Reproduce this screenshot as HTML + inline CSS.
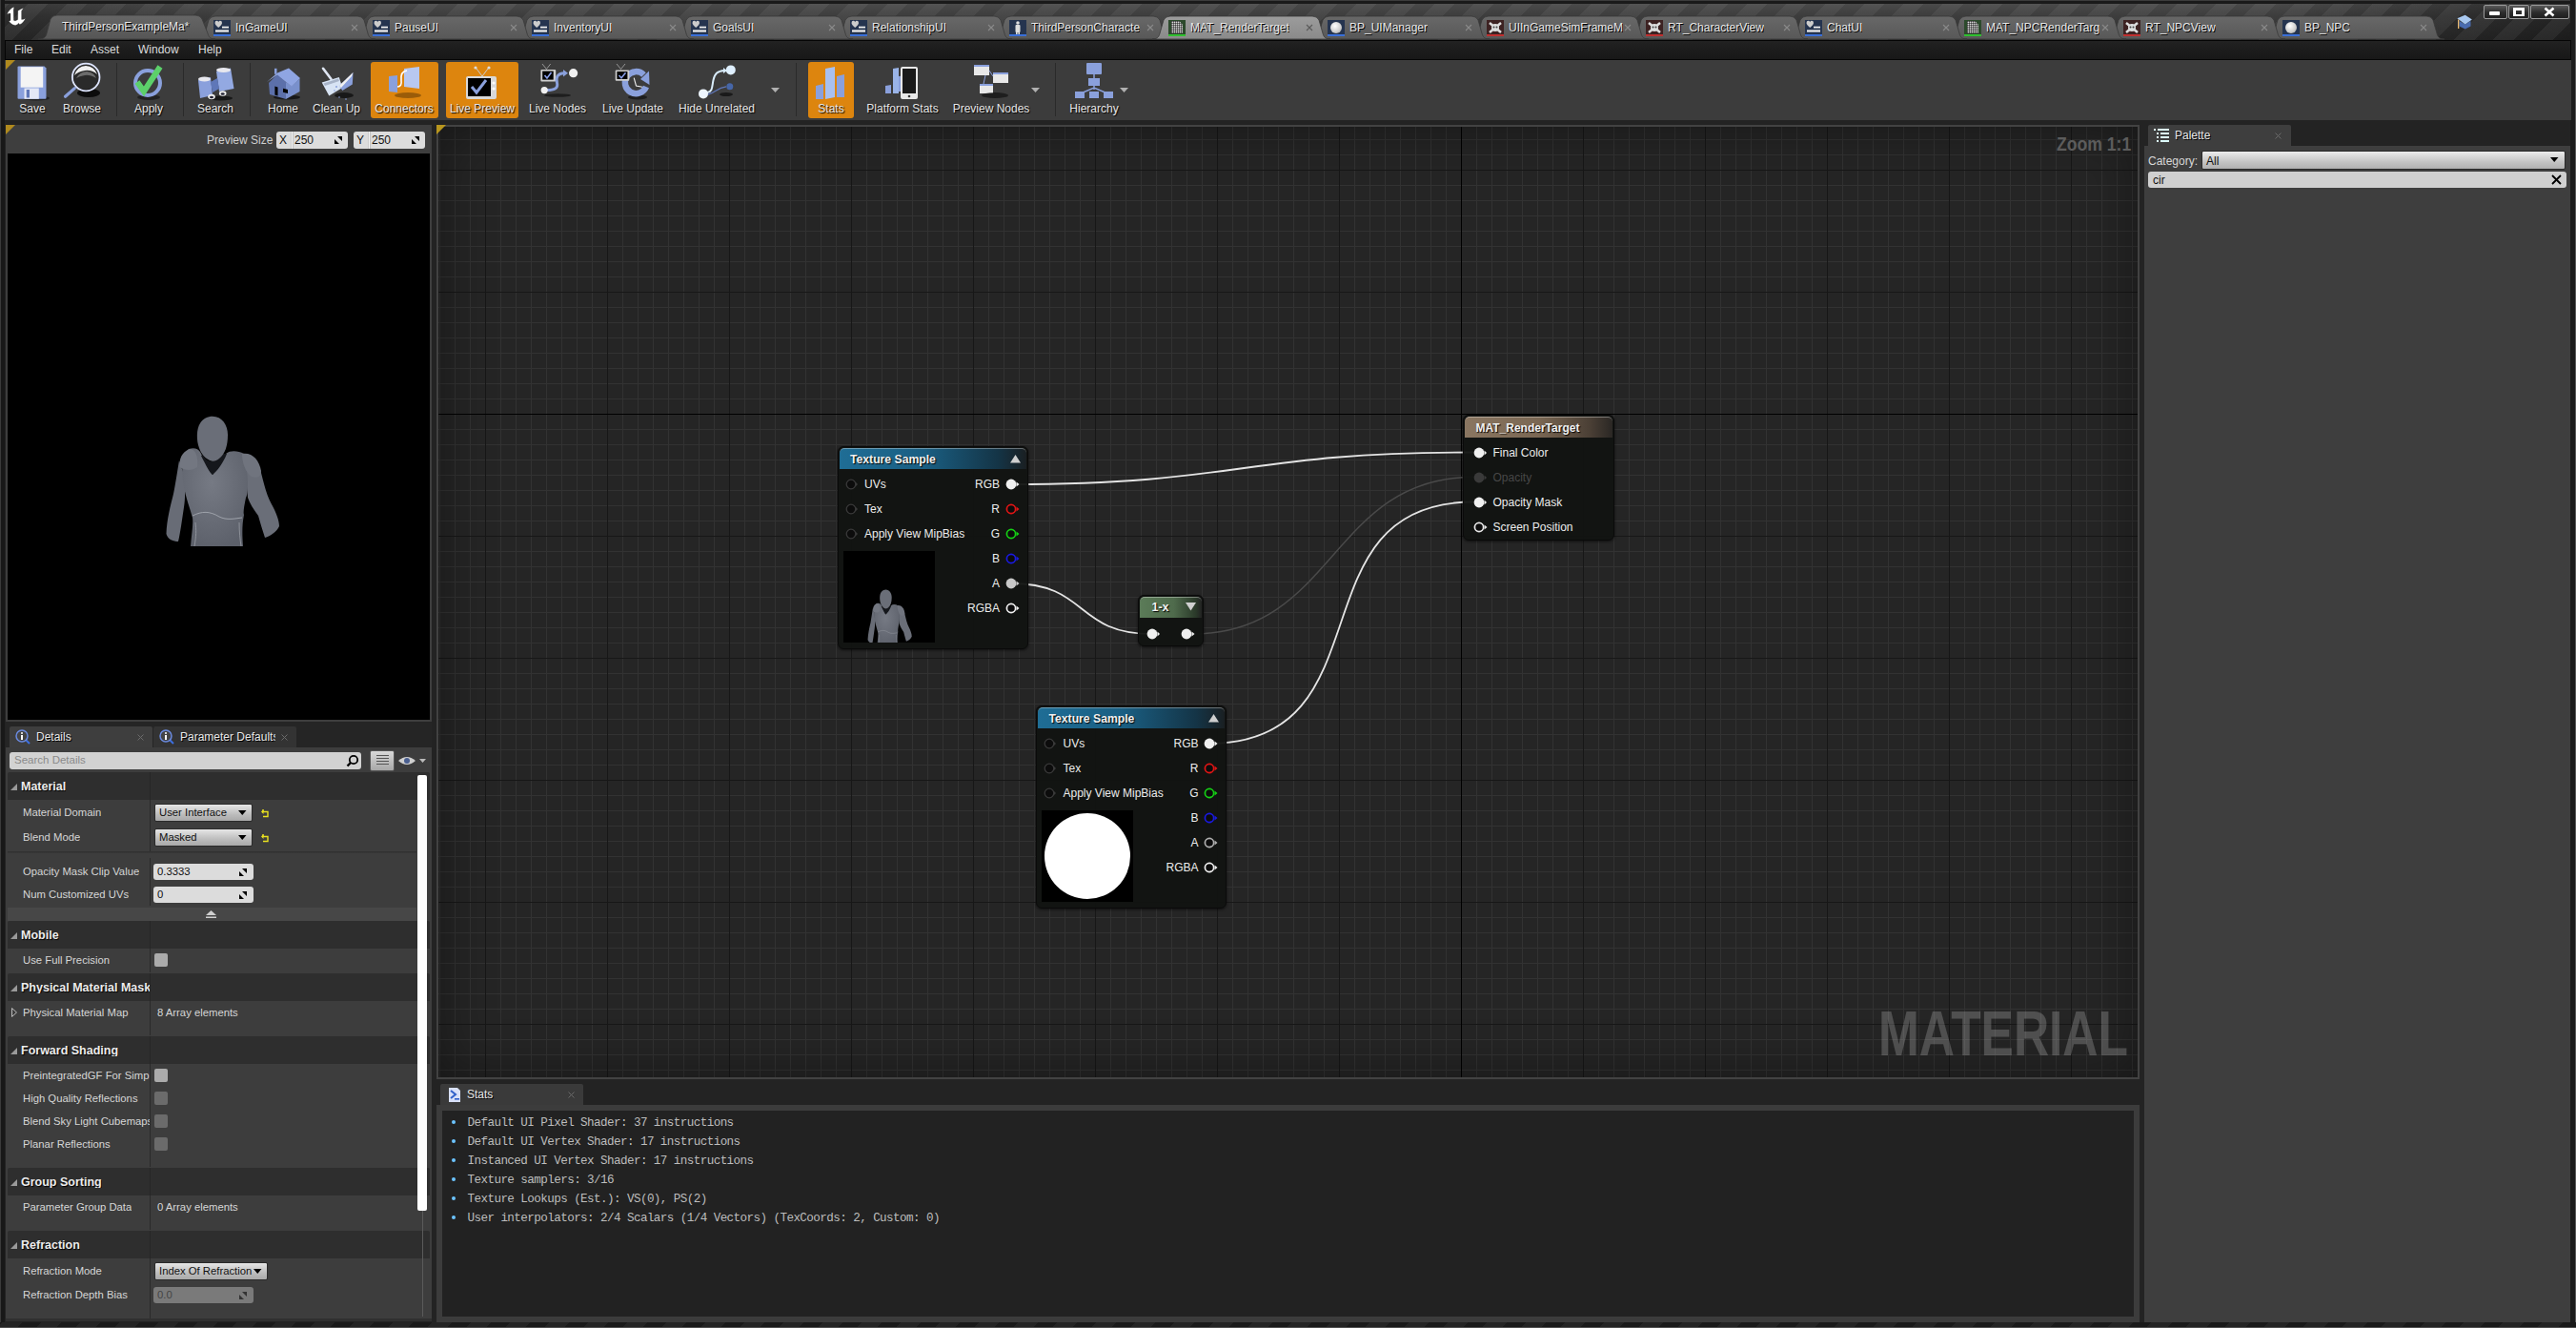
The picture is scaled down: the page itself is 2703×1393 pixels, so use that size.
<!DOCTYPE html>
<html><head><meta charset="utf-8">
<style>
*{box-sizing:border-box;margin:0;padding:0}
html,body{width:2703px;height:1393px;overflow:hidden;background:#232323;font-family:"Liberation Sans",sans-serif;color:#d0d0d0}
.a{position:absolute}
.t{position:absolute;white-space:nowrap;line-height:1}
svg{position:absolute;overflow:visible}
</style></head><body>
<div class="a" style="left:0;top:0;width:2703px;height:42px;background:#1a1a1a"></div>
<div class="a" style="left:5px;top:4px;width:2693px;height:38px;background:linear-gradient(#4a4a4a 0%,#3c3c3c 35%,#2e2e2e 100%)"></div>
<div class="a" style="left:5px;top:4px;width:2693px;height:38px;background:linear-gradient(90deg,rgba(0,0,0,0.25) 0px,rgba(0,0,0,0) 240px,rgba(0,0,0,0) 2380px,rgba(0,0,0,0.4) 2693px)"></div>
<div class="a" style="left:5px;top:4px;width:2693px;height:38px;background:repeating-linear-gradient(-45deg,rgba(255,255,255,0) 0 14px,rgba(255,255,255,0.055) 14px 29px)"></div>
<div class="a" style="left:0;top:0;width:2703px;height:1px;background:#3c3c3c"></div>
<svg style="left:4px;top:4px" width="28" height="28" viewBox="0 0 28 28">
<path d="M3.2 11 C5 7 8 4 10.8 3.2 L10.2 6.5 L10.4 17.2 Q11.5 18.2 13 17.5 L14.7 16.6 L14.8 7.2 C17 6 19 5 20.8 4.2 L18.6 7.5 L18.6 16.4 Q20.5 16.5 22.8 15.2 C21 19 18.5 21.5 16.2 21.6 L15.6 20.2 C14 22 12.8 22.6 11.8 22.6 C9 22.2 7 20.5 5.3 18.3 L7 17.5 L7 10 Q5 10 3.2 11 Z" fill="#fff" stroke="#000" stroke-width="0.4" stroke-opacity="0.5"/>
</svg><svg style="left:0;top:0" width="1" height="1"><defs><linearGradient id="tgi" x1="0" y1="0" x2="0" y2="1"><stop offset="0" stop-color="#686868"/><stop offset="1" stop-color="#585858"/></linearGradient><linearGradient id="tga" x1="0" y1="0" x2="0" y2="1"><stop offset="0" stop-color="#9c9c9c"/><stop offset="1" stop-color="#8a8a8a"/></linearGradient></defs></svg><svg style="left:0;top:0" width="2703" height="42"><path d="M2378,41 C2383,41 2385,39 2386,35 L2390,21 Q2392,17 2397,17 L2546,17 Q2551,17 2553,21 L2557,35 C2558,39 2560,41 2565,41 Z" fill="url(#tgi)" stroke="#383838" stroke-width="0.8"/></svg><div class="a" style="left:2395px;top:21px;width:18px;height:17px;background:#25344f;border-bottom:2px solid #3a6fd8"></div><div class="a" style="left:2398px;top:23px;width:12px;height:12px;border-radius:50%;background:radial-gradient(circle at 40% 35%,#fff,#ccc 60%,#888)"></div><div class="t" style="left:2418px;top:22.6px;font-size:12px;color:#e8e8e8;text-shadow:1px 1px 0 #000;max-width:120px;overflow:hidden;padding-bottom:3px">BP_NPC</div><svg style="left:2539px;top:25px" width="8" height="8"><path d="M1 1 L7 7 M7 1 L1 7" stroke="#8a8a8a" stroke-width="1.1"/></svg><svg style="left:0;top:0" width="2703" height="42"><path d="M2211,41 C2216,41 2218,39 2219,35 L2223,21 Q2225,17 2230,17 L2379,17 Q2384,17 2386,21 L2390,35 C2391,39 2393,41 2398,41 Z" fill="url(#tgi)" stroke="#383838" stroke-width="0.8"/></svg><div class="a" style="left:2228px;top:21px;width:18px;height:17px;background:#3d2222;border-bottom:2px solid #c03030"></div><svg style="left:2228px;top:21px" width="18" height="17"><path d="M3 3 L15 13 M15 3 L3 13" stroke="#ddd" stroke-width="2.5"/><circle cx="9" cy="8" r="4" fill="#ddd"/><circle cx="7.5" cy="7.5" r="1" fill="#444"/><circle cx="10.5" cy="7.5" r="1" fill="#444"/></svg><div class="t" style="left:2251px;top:22.6px;font-size:12px;color:#e8e8e8;text-shadow:1px 1px 0 #000;max-width:120px;overflow:hidden;padding-bottom:3px">RT_NPCView</div><svg style="left:2372px;top:25px" width="8" height="8"><path d="M1 1 L7 7 M7 1 L1 7" stroke="#8a8a8a" stroke-width="1.1"/></svg><svg style="left:0;top:0" width="2703" height="42"><path d="M2044,41 C2049,41 2051,39 2052,35 L2056,21 Q2058,17 2063,17 L2212,17 Q2217,17 2219,21 L2223,35 C2224,39 2226,41 2231,41 Z" fill="url(#tgi)" stroke="#383838" stroke-width="0.8"/></svg><div class="a" style="left:2061px;top:21px;width:18px;height:17px;background:#2c4a2c;border-bottom:2px solid #30c030"></div><div class="a" style="left:2064px;top:22px;width:12px;height:13px;background:repeating-linear-gradient(90deg,rgba(0,0,0,.45) 0 0.8px,transparent 0.8px 2px),repeating-linear-gradient(rgba(0,0,0,.45) 0 0.8px,transparent 0.8px 2px),#d8d8d8;clip-path:polygon(0 0,70% 0,100% 30%,100% 100%,0 100%)"></div><div class="t" style="left:2084px;top:22.6px;font-size:12px;color:#e8e8e8;text-shadow:1px 1px 0 #000;max-width:120px;overflow:hidden;padding-bottom:3px">MAT_NPCRenderTarg</div><svg style="left:2205px;top:25px" width="8" height="8"><path d="M1 1 L7 7 M7 1 L1 7" stroke="#8a8a8a" stroke-width="1.1"/></svg><svg style="left:0;top:0" width="2703" height="42"><path d="M1877,41 C1882,41 1884,39 1885,35 L1889,21 Q1891,17 1896,17 L2045,17 Q2050,17 2052,21 L2056,35 C2057,39 2059,41 2064,41 Z" fill="url(#tgi)" stroke="#383838" stroke-width="0.8"/></svg><div class="a" style="left:1894px;top:21px;width:18px;height:17px;background:#25344f;border-bottom:2px solid #3a6fd8"></div><svg style="left:1894px;top:21px" width="18" height="17"><path d="M1.5 3 Q1.5 0.8 3.5 0.8 Q4.8 0.8 5.2 2.2 Q5.6 0.8 7 0.8 Q9 0.8 9 3 Q9 5 5.2 8 Q1.5 5 1.5 3Z" fill="#ccc"/><rect x="9" y="6.7" width="7" height="1.8" fill="#eee"/><rect x="2" y="10.4" width="14" height="2.2" fill="#eee"/></svg><div class="t" style="left:1917px;top:22.6px;font-size:12px;color:#e8e8e8;text-shadow:1px 1px 0 #000;max-width:120px;overflow:hidden;padding-bottom:3px">ChatUI</div><svg style="left:2038px;top:25px" width="8" height="8"><path d="M1 1 L7 7 M7 1 L1 7" stroke="#8a8a8a" stroke-width="1.1"/></svg><svg style="left:0;top:0" width="2703" height="42"><path d="M1710,41 C1715,41 1717,39 1718,35 L1722,21 Q1724,17 1729,17 L1878,17 Q1883,17 1885,21 L1889,35 C1890,39 1892,41 1897,41 Z" fill="url(#tgi)" stroke="#383838" stroke-width="0.8"/></svg><div class="a" style="left:1727px;top:21px;width:18px;height:17px;background:#3d2222;border-bottom:2px solid #c03030"></div><svg style="left:1727px;top:21px" width="18" height="17"><path d="M3 3 L15 13 M15 3 L3 13" stroke="#ddd" stroke-width="2.5"/><circle cx="9" cy="8" r="4" fill="#ddd"/><circle cx="7.5" cy="7.5" r="1" fill="#444"/><circle cx="10.5" cy="7.5" r="1" fill="#444"/></svg><div class="t" style="left:1750px;top:22.6px;font-size:12px;color:#e8e8e8;text-shadow:1px 1px 0 #000;max-width:120px;overflow:hidden;padding-bottom:3px">RT_CharacterView</div><svg style="left:1871px;top:25px" width="8" height="8"><path d="M1 1 L7 7 M7 1 L1 7" stroke="#8a8a8a" stroke-width="1.1"/></svg><svg style="left:0;top:0" width="2703" height="42"><path d="M1543,41 C1548,41 1550,39 1551,35 L1555,21 Q1557,17 1562,17 L1711,17 Q1716,17 1718,21 L1722,35 C1723,39 1725,41 1730,41 Z" fill="url(#tgi)" stroke="#383838" stroke-width="0.8"/></svg><div class="a" style="left:1560px;top:21px;width:18px;height:17px;background:#3d2222;border-bottom:2px solid #c03030"></div><svg style="left:1560px;top:21px" width="18" height="17"><path d="M3 3 L15 13 M15 3 L3 13" stroke="#ddd" stroke-width="2.5"/><circle cx="9" cy="8" r="4" fill="#ddd"/><circle cx="7.5" cy="7.5" r="1" fill="#444"/><circle cx="10.5" cy="7.5" r="1" fill="#444"/></svg><div class="t" style="left:1583px;top:22.6px;font-size:12px;color:#e8e8e8;text-shadow:1px 1px 0 #000;max-width:120px;overflow:hidden;padding-bottom:3px">UIInGameSimFrameM</div><svg style="left:1704px;top:25px" width="8" height="8"><path d="M1 1 L7 7 M7 1 L1 7" stroke="#8a8a8a" stroke-width="1.1"/></svg><svg style="left:0;top:0" width="2703" height="42"><path d="M1376,41 C1381,41 1383,39 1384,35 L1388,21 Q1390,17 1395,17 L1544,17 Q1549,17 1551,21 L1555,35 C1556,39 1558,41 1563,41 Z" fill="url(#tgi)" stroke="#383838" stroke-width="0.8"/></svg><div class="a" style="left:1393px;top:21px;width:18px;height:17px;background:#25344f;border-bottom:2px solid #3a6fd8"></div><div class="a" style="left:1396px;top:23px;width:12px;height:12px;border-radius:50%;background:radial-gradient(circle at 40% 35%,#fff,#ccc 60%,#888)"></div><div class="t" style="left:1416px;top:22.6px;font-size:12px;color:#e8e8e8;text-shadow:1px 1px 0 #000;max-width:120px;overflow:hidden;padding-bottom:3px">BP_UIManager</div><svg style="left:1537px;top:25px" width="8" height="8"><path d="M1 1 L7 7 M7 1 L1 7" stroke="#8a8a8a" stroke-width="1.1"/></svg><svg style="left:0;top:0" width="2703" height="42"><path d="M1042,41 C1047,41 1049,39 1050,35 L1054,21 Q1056,17 1061,17 L1210,17 Q1215,17 1217,21 L1221,35 C1222,39 1224,41 1229,41 Z" fill="url(#tgi)" stroke="#383838" stroke-width="0.8"/></svg><div class="a" style="left:1059px;top:21px;width:18px;height:17px;background:#25344f;border-bottom:2px solid #3a6fd8"></div><svg style="left:1059px;top:21px" width="18" height="17"><circle cx="9" cy="3" r="1.8" fill="#ddd"/><rect x="6.5" y="5" width="5" height="8" rx="1" fill="#ddd"/><rect x="7" y="12" width="1.6" height="3" fill="#ddd"/><rect x="9.4" y="12" width="1.6" height="3" fill="#ddd"/></svg><div class="t" style="left:1082px;top:22.6px;font-size:12px;color:#e8e8e8;text-shadow:1px 1px 0 #000;max-width:120px;overflow:hidden;padding-bottom:3px">ThirdPersonCharacte</div><svg style="left:1203px;top:25px" width="8" height="8"><path d="M1 1 L7 7 M7 1 L1 7" stroke="#8a8a8a" stroke-width="1.1"/></svg><svg style="left:0;top:0" width="2703" height="42"><path d="M875,41 C880,41 882,39 883,35 L887,21 Q889,17 894,17 L1043,17 Q1048,17 1050,21 L1054,35 C1055,39 1057,41 1062,41 Z" fill="url(#tgi)" stroke="#383838" stroke-width="0.8"/></svg><div class="a" style="left:892px;top:21px;width:18px;height:17px;background:#25344f;border-bottom:2px solid #3a6fd8"></div><svg style="left:892px;top:21px" width="18" height="17"><path d="M1.5 3 Q1.5 0.8 3.5 0.8 Q4.8 0.8 5.2 2.2 Q5.6 0.8 7 0.8 Q9 0.8 9 3 Q9 5 5.2 8 Q1.5 5 1.5 3Z" fill="#ccc"/><rect x="9" y="6.7" width="7" height="1.8" fill="#eee"/><rect x="2" y="10.4" width="14" height="2.2" fill="#eee"/></svg><div class="t" style="left:915px;top:22.6px;font-size:12px;color:#e8e8e8;text-shadow:1px 1px 0 #000;max-width:120px;overflow:hidden;padding-bottom:3px">RelationshipUI</div><svg style="left:1036px;top:25px" width="8" height="8"><path d="M1 1 L7 7 M7 1 L1 7" stroke="#8a8a8a" stroke-width="1.1"/></svg><svg style="left:0;top:0" width="2703" height="42"><path d="M708,41 C713,41 715,39 716,35 L720,21 Q722,17 727,17 L876,17 Q881,17 883,21 L887,35 C888,39 890,41 895,41 Z" fill="url(#tgi)" stroke="#383838" stroke-width="0.8"/></svg><div class="a" style="left:725px;top:21px;width:18px;height:17px;background:#25344f;border-bottom:2px solid #3a6fd8"></div><svg style="left:725px;top:21px" width="18" height="17"><path d="M1.5 3 Q1.5 0.8 3.5 0.8 Q4.8 0.8 5.2 2.2 Q5.6 0.8 7 0.8 Q9 0.8 9 3 Q9 5 5.2 8 Q1.5 5 1.5 3Z" fill="#ccc"/><rect x="9" y="6.7" width="7" height="1.8" fill="#eee"/><rect x="2" y="10.4" width="14" height="2.2" fill="#eee"/></svg><div class="t" style="left:748px;top:22.6px;font-size:12px;color:#e8e8e8;text-shadow:1px 1px 0 #000;max-width:120px;overflow:hidden;padding-bottom:3px">GoalsUI</div><svg style="left:869px;top:25px" width="8" height="8"><path d="M1 1 L7 7 M7 1 L1 7" stroke="#8a8a8a" stroke-width="1.1"/></svg><svg style="left:0;top:0" width="2703" height="42"><path d="M541,41 C546,41 548,39 549,35 L553,21 Q555,17 560,17 L709,17 Q714,17 716,21 L720,35 C721,39 723,41 728,41 Z" fill="url(#tgi)" stroke="#383838" stroke-width="0.8"/></svg><div class="a" style="left:558px;top:21px;width:18px;height:17px;background:#25344f;border-bottom:2px solid #3a6fd8"></div><svg style="left:558px;top:21px" width="18" height="17"><path d="M1.5 3 Q1.5 0.8 3.5 0.8 Q4.8 0.8 5.2 2.2 Q5.6 0.8 7 0.8 Q9 0.8 9 3 Q9 5 5.2 8 Q1.5 5 1.5 3Z" fill="#ccc"/><rect x="9" y="6.7" width="7" height="1.8" fill="#eee"/><rect x="2" y="10.4" width="14" height="2.2" fill="#eee"/></svg><div class="t" style="left:581px;top:22.6px;font-size:12px;color:#e8e8e8;text-shadow:1px 1px 0 #000;max-width:120px;overflow:hidden;padding-bottom:3px">InventoryUI</div><svg style="left:702px;top:25px" width="8" height="8"><path d="M1 1 L7 7 M7 1 L1 7" stroke="#8a8a8a" stroke-width="1.1"/></svg><svg style="left:0;top:0" width="2703" height="42"><path d="M374,41 C379,41 381,39 382,35 L386,21 Q388,17 393,17 L542,17 Q547,17 549,21 L553,35 C554,39 556,41 561,41 Z" fill="url(#tgi)" stroke="#383838" stroke-width="0.8"/></svg><div class="a" style="left:391px;top:21px;width:18px;height:17px;background:#25344f;border-bottom:2px solid #3a6fd8"></div><svg style="left:391px;top:21px" width="18" height="17"><path d="M1.5 3 Q1.5 0.8 3.5 0.8 Q4.8 0.8 5.2 2.2 Q5.6 0.8 7 0.8 Q9 0.8 9 3 Q9 5 5.2 8 Q1.5 5 1.5 3Z" fill="#ccc"/><rect x="9" y="6.7" width="7" height="1.8" fill="#eee"/><rect x="2" y="10.4" width="14" height="2.2" fill="#eee"/></svg><div class="t" style="left:414px;top:22.6px;font-size:12px;color:#e8e8e8;text-shadow:1px 1px 0 #000;max-width:120px;overflow:hidden;padding-bottom:3px">PauseUI</div><svg style="left:535px;top:25px" width="8" height="8"><path d="M1 1 L7 7 M7 1 L1 7" stroke="#8a8a8a" stroke-width="1.1"/></svg><svg style="left:0;top:0" width="2703" height="42"><path d="M207,41 C212,41 214,39 215,35 L219,21 Q221,17 226,17 L375,17 Q380,17 382,21 L386,35 C387,39 389,41 394,41 Z" fill="url(#tgi)" stroke="#383838" stroke-width="0.8"/></svg><div class="a" style="left:224px;top:21px;width:18px;height:17px;background:#25344f;border-bottom:2px solid #3a6fd8"></div><svg style="left:224px;top:21px" width="18" height="17"><path d="M1.5 3 Q1.5 0.8 3.5 0.8 Q4.8 0.8 5.2 2.2 Q5.6 0.8 7 0.8 Q9 0.8 9 3 Q9 5 5.2 8 Q1.5 5 1.5 3Z" fill="#ccc"/><rect x="9" y="6.7" width="7" height="1.8" fill="#eee"/><rect x="2" y="10.4" width="14" height="2.2" fill="#eee"/></svg><div class="t" style="left:247px;top:22.6px;font-size:12px;color:#e8e8e8;text-shadow:1px 1px 0 #000;max-width:120px;overflow:hidden;padding-bottom:3px">InGameUI</div><svg style="left:368px;top:25px" width="8" height="8"><path d="M1 1 L7 7 M7 1 L1 7" stroke="#8a8a8a" stroke-width="1.1"/></svg><svg style="left:0;top:0" width="2703" height="42"><defs><linearGradient id="tg0" x1="0" y1="0" x2="0" y2="1"><stop offset="0" stop-color="#666"/><stop offset="1" stop-color="#565656"/></linearGradient></defs><path d="M40,41 C46,41 48,39 49,35 L53,20 Q55,16 60,16 L205,16 Q210,16 212,20 L218,35 C219,39 221,41 226,41 Z" fill="url(#tg0)" stroke="#3a3a3a" stroke-width="0.8"/></svg><div class="t" style="left:65px;top:21.6px;font-size:12px;color:#e8e8e8;text-shadow:1px 1px 0 #000">ThirdPersonExampleMa*</div><svg style="left:0;top:0" width="2703" height="42"><path d="M1209,41 C1214,41 1216,39 1217,35 L1221,21 Q1223,17 1228,17 L1377,17 Q1382,17 1384,21 L1388,35 C1389,39 1391,41 1396,41 Z" fill="url(#tga)" stroke="#383838" stroke-width="0.8"/></svg><div class="a" style="left:1226px;top:21px;width:18px;height:17px;background:#2c4a2c;border-bottom:2px solid #30c030"></div><div class="a" style="left:1229px;top:22px;width:12px;height:13px;background:repeating-linear-gradient(90deg,rgba(0,0,0,.45) 0 0.8px,transparent 0.8px 2px),repeating-linear-gradient(rgba(0,0,0,.45) 0 0.8px,transparent 0.8px 2px),#d8d8d8;clip-path:polygon(0 0,70% 0,100% 30%,100% 100%,0 100%)"></div><div class="t" style="left:1249px;top:22.6px;font-size:12px;color:#e8e8e8;text-shadow:1px 1px 0 #000;max-width:120px;overflow:hidden;padding-bottom:3px">MAT_RenderTarget</div><svg style="left:1370px;top:25px" width="8" height="8"><path d="M1 1 L7 7 M7 1 L1 7" stroke="#5a5a5a" stroke-width="1.1"/></svg><svg style="left:2577px;top:15px" width="20" height="18" viewBox="0 0 20 18">
<path d="M3.5 7 L9.7 10.5 L15.5 7 L15.5 12.5 L9.7 15.5 L3.5 12.5Z" fill="#4a6cb0"/>
<path d="M1.3 4.2 L9.7 0.8 L16.9 5.6 L9.7 10.6Z" fill="#a8c8f0"/>
<rect x="2" y="5.5" width="1.3" height="9.5" fill="#e8b870"/>
</svg><div class="a" style="left:2606px;top:5px;width:25px;height:15px;border:1px solid #9a9a9a;border-radius:2px;background:linear-gradient(#5a5a5a,#2c2c2c 55%,#1e1e1e)"></div>
<div class="a" style="left:2632px;top:5px;width:22px;height:15px;border:1px solid #9a9a9a;border-radius:2px;background:linear-gradient(#5a5a5a,#2c2c2c 55%,#1e1e1e)"></div>
<div class="a" style="left:2655px;top:5px;width:41px;height:15px;border:1px solid #9a9a9a;border-radius:2px;background:linear-gradient(#5a5a5a,#2c2c2c 55%,#1e1e1e)"></div>
<div class="a" style="left:2612px;top:12px;width:11px;height:4px;background:#fff;border-radius:1px"></div>
<div class="a" style="left:2637px;top:8px;width:12px;height:9px;border:3px solid #fff;border-top-width:3px;border-bottom-width:2px"></div>
<svg style="left:2669px;top:7px" width="12" height="11"><path d="M1.5 1.5 L10.5 9.5 M10.5 1.5 L1.5 9.5" stroke="#fff" stroke-width="2.6"/></svg>
<div class="a" style="left:0;top:0;width:5px;height:1393px;background:#181818;border-left:1px solid #3a3a3a"></div>
<div class="a" style="left:2697px;top:0;width:6px;height:1393px;background:#1c1c1c;border-right:1px solid #5a5a5a"></div>
<div class="a" style="left:0;top:1387px;width:2703px;height:6px;background:repeating-linear-gradient(-45deg,#1a1a1a 0 14px,#242424 14px 29px)"></div><div class="a" style="left:0;top:1392px;width:2703px;height:1px;background:#505050"></div>
<div class="a" style="left:5px;top:42px;width:2693px;height:21px;background:#050505"></div>
<div class="a" style="left:6px;top:43px;width:2691px;height:19px;background:linear-gradient(#222 0%,#1c1c1c 50%,#181818 100%)"></div>
<div class="t" style="left:15px;top:46px;font-size:12px;color:#dcdcdc">File</div><div class="t" style="left:54px;top:46px;font-size:12px;color:#dcdcdc">Edit</div><div class="t" style="left:95px;top:46px;font-size:12px;color:#dcdcdc">Asset</div><div class="t" style="left:145px;top:46px;font-size:12px;color:#dcdcdc">Window</div><div class="t" style="left:208px;top:46px;font-size:12px;color:#dcdcdc">Help</div><div class="a" style="left:5px;top:63px;width:2693px;height:63px;background:#3c3c3c"></div><svg style="left:6px;top:63px" width="11" height="10"><path d="M0 0 H10 L0 10Z" fill="#b08a1e"/></svg><div class="a" style="left:122px;top:66px;width:1px;height:56px;background:#2a2a2a"></div><div class="a" style="left:192px;top:66px;width:1px;height:56px;background:#2a2a2a"></div><div class="a" style="left:262px;top:66px;width:1px;height:56px;background:#2a2a2a"></div><div class="a" style="left:835px;top:66px;width:1px;height:56px;background:#2a2a2a"></div><div class="a" style="left:1107px;top:66px;width:1px;height:56px;background:#2a2a2a"></div><div class="a" style="left:389px;top:65px;width:71px;height:59px;background:#dd850e;border-radius:3px"></div><div class="a" style="left:468px;top:65px;width:76px;height:59px;background:#dd850e;border-radius:3px"></div><div class="a" style="left:848px;top:65px;width:48px;height:59px;background:#dd850e;border-radius:3px"></div><svg style="left:14px;top:66px" width="40" height="40" viewBox="0 0 40 40"><ellipse cx="24" cy="37" rx="14" ry="2.5" fill="#111" opacity="0.6"/><path d="M4.5 4.6 Q4.5 3.6 5.5 3.6 L32.5 3.6 L34.5 5.6 L34.5 36.8 Q34.5 37.8 33.5 37.8 L5.5 37.8 Q4.5 37.8 4.5 36.8Z" fill="#8aa0dc"/><rect x="7.7" y="4.2" width="23.5" height="21.5" fill="#f4f4f4"/><rect x="11.5" y="26.5" width="15.3" height="11.3" fill="#e4e8f6"/><rect x="13.7" y="28" width="3.3" height="8.5" fill="#5f77b8"/></svg><div class="t" style="left:-26px;width:120px;text-align:center;top:108px;font-size:12px;color:#e6e6e6;text-shadow:1px 1px 1px #000">Save</div><svg style="left:66px;top:66px" width="40" height="40" viewBox="0 0 40 40"><ellipse cx="27" cy="31.5" rx="12" ry="4.5" fill="#000" opacity="0.8"/><path d="M2.5 35.3 L12.3 26.6" stroke="#8aa0dc" stroke-width="3.2" stroke-linecap="round"/><circle cx="24.2" cy="15" r="14.3" fill="none" stroke="#dfe6ff" stroke-width="1.8"/><circle cx="24.2" cy="15" r="13" fill="#2a2a2a"/><path d="M12 13 Q15 3.5 24 3 Q33 3.5 36 12 Q30 7 23 8 Q16 9 12 13Z" fill="#f0f0f0"/><path d="M14 16 Q18 9 25 9 Q33 10 35 16 Q28 12 23 13 Q17 14 14 16Z" fill="#9a9a9a" opacity="0.6"/></svg><div class="t" style="left:26px;width:120px;text-align:center;top:108px;font-size:12px;color:#e6e6e6;text-shadow:1px 1px 1px #000">Browse</div><svg style="left:136px;top:66px" width="40" height="40" viewBox="0 0 40 40"><ellipse cx="20" cy="36" rx="12" ry="3" fill="#111" opacity="0.6"/><circle cx="19" cy="21" r="13" fill="none" stroke="#8aa0dc" stroke-width="4"/><path d="M8 20 L15 30 L32 4" stroke="#5cd06a" stroke-width="6" fill="none"/></svg><div class="t" style="left:96px;width:120px;text-align:center;top:108px;font-size:12px;color:#e6e6e6;text-shadow:1px 1px 1px #000">Apply</div><svg style="left:206px;top:66px" width="40" height="40" viewBox="0 0 40 40"><ellipse cx="25" cy="37" rx="13" ry="2.5" fill="#000" opacity="0.6"/><path d="M2 18 L15 15 L17 34 L4 37Z" fill="#8aa0dc"/><path d="M21 9 L36 5.5 L39.5 27 L24 30Z" fill="#93a9e2"/><ellipse cx="8.5" cy="17" rx="6.5" ry="2.6" fill="#e8e8ee"/><ellipse cx="28.5" cy="7.5" rx="7.5" ry="2.6" fill="#e8e8ee"/><path d="M15 20 L22 16 L24 27 L17 31Z" fill="#5f77b8"/><ellipse cx="16" cy="35.5" rx="3.8" ry="2.8" fill="#eee"/><ellipse cx="16" cy="36" rx="2" ry="1.3" fill="#223"/><ellipse cx="27.7" cy="32" rx="3.8" ry="2.8" fill="#eee"/><ellipse cx="27.7" cy="32.5" rx="2" ry="1.3" fill="#223"/></svg><div class="t" style="left:166px;width:120px;text-align:center;top:108px;font-size:12px;color:#e6e6e6;text-shadow:1px 1px 1px #000">Search</div><svg style="left:277px;top:66px" width="40" height="40" viewBox="0 0 40 40"><ellipse cx="24" cy="36" rx="14" ry="2.5" fill="#000" opacity="0.6"/><rect x="11" y="5.8" width="2.5" height="6" fill="#8aa0dc"/><path d="M23 20 L29 24 L37.5 16.5 L37.5 30 L23 38Z" fill="#7990cc"/><path d="M5 21 L14 12 L23 20 L23 38 L6 33Z" fill="#5c70aa"/><path d="M3 20 L14 10.5 L26 5.5 L38 16 L29 24.5 L23 20 L14 12.5Z" fill="#8fa5e2"/><path d="M11.4 24.6 L14.5 25.5 L14.5 34.5 L11.4 33.5Z" fill="#000"/><path d="M20 26.7 L25 28 L25 32 L20 30.8Z" fill="#000"/></svg><div class="t" style="left:237px;width:120px;text-align:center;top:108px;font-size:12px;color:#e6e6e6;text-shadow:1px 1px 1px #000">Home</div><svg style="left:333px;top:66px" width="40" height="40" viewBox="0 0 40 40"><ellipse cx="28" cy="34" rx="10" ry="3" fill="#000" opacity="0.6"/><path d="M6 5.8 L14.5 17" stroke="#dfe6f2" stroke-width="2.6" stroke-linecap="round"/><path d="M4.7 20.5 L22.8 14.9 L26.3 26 L12.3 34.4Z" fill="#d8e4f4"/><path d="M6.5 21.5 L22 16.5 L23 19 L8 24Z" fill="#a8b4c8"/><path d="M22.8 24 L37.5 10 L36.8 22.6 L26.3 29Z" fill="#8aa0dc"/><path d="M22.8 24 L37.5 10 L36 14 L25 26Z" fill="#f0f0f0"/><circle cx="20" cy="25" r="1" fill="#8aa0dc"/><circle cx="18" cy="29" r="0.8" fill="#8aa0dc"/><circle cx="23" cy="36" r="0.8" fill="#8aa0dc"/><circle cx="30" cy="38" r="0.8" fill="#8aa0dc"/></svg><div class="t" style="left:293px;width:120px;text-align:center;top:108px;font-size:12px;color:#e6e6e6;text-shadow:1px 1px 1px #000">Clean Up</div><svg style="left:404px;top:66px" width="40" height="40" viewBox="0 0 40 40"><ellipse cx="24" cy="34" rx="14" ry="3" fill="#000" opacity="0.3"/><path d="M4 14 L13 13 L13 31 L4 30Z" fill="#8aa0dc"/><path d="M20 6 L36 4 L36 27 L20 25Z" fill="#b8c8f0"/><path d="M13 25 Q18 25 17 18 Q16 9 23 8" stroke="#fff" stroke-width="1.6" fill="none"/></svg><div class="t" style="left:364px;width:120px;text-align:center;top:108px;font-size:12px;color:#e6e6e6;text-shadow:1px 1px 1px #000">Connectors</div><svg style="left:486px;top:66px" width="40" height="40" viewBox="0 0 40 40"><path d="M14 6 L20 14 L26 6" stroke="#ccc" stroke-width="1" fill="none"/><circle cx="13" cy="5" r="1.6" fill="#ddd"/><circle cx="27" cy="5" r="1.6" fill="#ddd"/><rect x="3" y="14" width="32" height="24" rx="2" fill="#d8d8d8"/><rect x="5" y="16" width="24" height="19" fill="#000"/><path d="M9 25 L14 31 L24 18" stroke="#8aa0dc" stroke-width="3" fill="none"/><circle cx="32" cy="21" r="1.6" fill="#fff"/><circle cx="32" cy="27" r="1.6" fill="#fff"/></svg><div class="t" style="left:446px;width:120px;text-align:center;top:108px;font-size:12px;color:#e6e6e6;text-shadow:1px 1px 1px #000">Live Preview</div><svg style="left:565px;top:66px" width="40" height="40" viewBox="0 0 40 40"><ellipse cx="20" cy="34" rx="14" ry="1.8" fill="#111" opacity="0.7"/><path d="M4 1 L8.4 6.5 L12.7 1" stroke="#bbb" stroke-width="0.7" fill="none"/><rect x="2.4" y="6.9" width="15.8" height="12.5" rx="1" fill="#cfcfcf"/><rect x="4.2" y="8.6" width="11.5" height="9" fill="#000"/><path d="M6.5 13 L9 16 L13.5 10" stroke="#8aa0ec" stroke-width="1.6" fill="none"/><path d="M9 28.6 C16 28.6 21 27 19.5 21 C18 15 20 11 27 10.7" stroke="#8aa0dc" stroke-width="3" fill="none"/><path d="M26 7 L31 10.7 L26 14.5Z" fill="#8aa0dc"/><circle cx="36.6" cy="10.7" r="4.6" fill="#f0f0f0"/><circle cx="6.2" cy="28.6" r="3.6" fill="#f0f0f0"/></svg><div class="t" style="left:525px;width:120px;text-align:center;top:108px;font-size:12px;color:#e6e6e6;text-shadow:1px 1px 1px #000">Live Nodes</div><svg style="left:644px;top:66px" width="40" height="40" viewBox="0 0 40 40"><ellipse cx="25" cy="36" rx="10" ry="2.5" fill="#111" opacity="0.7"/><path d="M31.5 12.5 A11.5 11.5 0 1 0 34 25" stroke="#8aa0dc" stroke-width="6.5" fill="none"/><path d="M28 17 L37 8.5 L37.5 23Z" fill="#8aa0dc"/><path d="M21.2 15.6 L23.5 24 L29.9 25.3" stroke="#f0f0f0" stroke-width="1.1" fill="none"/><path d="M3 1 L7.5 6.5 L12 1" stroke="#bbb" stroke-width="0.7" fill="none"/><rect x="1.7" y="7.4" width="14.6" height="11.4" rx="1" fill="#cfcfcf"/><rect x="3.4" y="9" width="11" height="8" fill="#000"/><path d="M5.5 13 L8 15.8 L12.5 10.3" stroke="#8aa0ec" stroke-width="1.5" fill="none"/></svg><div class="t" style="left:604px;width:120px;text-align:center;top:108px;font-size:12px;color:#e6e6e6;text-shadow:1px 1px 1px #000">Live Update</div><svg style="left:732px;top:66px" width="40" height="40" viewBox="0 0 40 40"><ellipse cx="30" cy="33" rx="7" ry="2" fill="#111" opacity="0.8"/><path d="M10 31 C16 30 15 25 16.5 18 C18 11 21 8.5 28 8" stroke="#d8ecfa" stroke-width="2" fill="none"/><path d="M27 5 L31 8 L27 11Z" fill="#d8ecfa"/><path d="M11 33 C18 32 20 26 30 24.8" stroke="#5f77b8" stroke-width="1.3" fill="none"/><circle cx="34.8" cy="7.4" r="5" fill="#dff0ff"/><circle cx="33.8" cy="24.8" r="3.5" fill="#4666a8"/><circle cx="6" cy="32.4" r="5" fill="#eef6ff"/></svg><div class="t" style="left:692px;width:120px;text-align:center;top:108px;font-size:12px;color:#e6e6e6;text-shadow:1px 1px 1px #000">Hide Unrelated</div><svg style="left:852px;top:66px" width="40" height="40" viewBox="0 0 40 40"><path d="M4 24 L12 22 L12 38 L4 38Z" fill="#8aa0dc"/><path d="M14 6 L24 4 L24 36 L14 38Z" fill="#a8c0f0"/><path d="M26 14 L34 12 L34 36 L26 36Z" fill="#8aa0dc"/></svg><div class="t" style="left:812px;width:120px;text-align:center;top:108px;font-size:12px;color:#e6e6e6;text-shadow:1px 1px 1px #000">Stats</div><svg style="left:927px;top:66px" width="40" height="40" viewBox="0 0 40 40"><path d="M2 24 L8 23 L8 32 L2 32Z" fill="#8aa0dc"/><path d="M10 6 L16 5 L16 32 L10 32Z" fill="#9ab4e8"/><path d="M16 14 L24 13 L24 30 L16 30Z" fill="#8aa0dc"/><rect x="18" y="4" width="18" height="34" rx="2" fill="#e8e8e8"/><rect x="20" y="6" width="14" height="26" fill="#1a1a1a"/><circle cx="27" cy="35" r="1.3" fill="#333"/></svg><div class="t" style="left:887px;width:120px;text-align:center;top:108px;font-size:12px;color:#e6e6e6;text-shadow:1px 1px 1px #000">Platform Stats</div><svg style="left:1020px;top:66px" width="40" height="40" viewBox="0 0 40 40"><rect x="2" y="2" width="16" height="11" fill="#e8e8e8"/><rect x="2" y="2" width="16" height="2" fill="#8aa0dc"/><rect x="22" y="10" width="16" height="11" fill="#e8e8e8"/><rect x="22" y="10" width="16" height="2" fill="#8aa0dc"/><rect x="8" y="22" width="14" height="10" fill="#e8e8e8"/><rect x="8" y="22" width="14" height="2" fill="#8aa0dc"/><path d="M18 8 L22 14 M14 13 L12 22" stroke="#8aa0dc" stroke-width="1"/><ellipse cx="24" cy="34" rx="14" ry="3" fill="#111" opacity="0.7"/></svg><div class="t" style="left:980px;width:120px;text-align:center;top:108px;font-size:12px;color:#e6e6e6;text-shadow:1px 1px 1px #000">Preview Nodes</div><svg style="left:1128px;top:66px" width="40" height="40" viewBox="0 0 40 40"><rect x="12" y="0" width="16" height="12" rx="1" fill="#8aa0dc"/><rect x="14" y="16" width="12" height="8" fill="#8aa0dc"/><path d="M20 12 V16 M20 24 V28 M6 32 L20 26 L34 32" stroke="#8aa0dc" stroke-width="1.5" fill="none"/><rect x="0" y="30" width="10" height="7" fill="#8aa0dc"/><rect x="15" y="30" width="10" height="7" fill="#8aa0dc"/><rect x="30" y="30" width="10" height="7" fill="#8aa0dc"/></svg><div class="t" style="left:1088px;width:120px;text-align:center;top:108px;font-size:12px;color:#e6e6e6;text-shadow:1px 1px 1px #000">Hierarchy</div><svg style="left:809px;top:92px" width="10" height="6"><path d="M0 0 H9 L4.5 5Z" fill="#b0b0b0"/></svg><svg style="left:1082px;top:92px" width="10" height="6"><path d="M0 0 H9 L4.5 5Z" fill="#b0b0b0"/></svg><svg style="left:1175px;top:92px" width="10" height="6"><path d="M0 0 H9 L4.5 5Z" fill="#b0b0b0"/></svg><div class="a" style="left:6px;top:131px;width:447px;height:626px;background:#3e3e3e"></div>
<div class="a" style="left:8px;top:161px;width:443px;height:594px;background:#000"></div>
<svg style="left:6px;top:131px" width="11" height="10"><path d="M0 0 H10 L0 10Z" fill="#b08a1e"/></svg>
<div class="t" style="left:217px;top:141px;font-size:12px;color:#cfcfcf">Preview Size</div>
<div class="a" style="left:290px;top:138px;width:75px;height:18px;background:#dcdcdc;border-radius:3px"></div><div class="a" style="left:305px;top:138px;width:3px;height:18px;background:linear-gradient(90deg,#b8b8b8,#f4f4f4,#aaa)"></div><div class="t" style="left:293px;top:141px;font-size:12px;color:#111">X</div><div class="t" style="left:309px;top:141px;font-size:12px;color:#111">250</div><svg style="left:351px;top:143px" width="9" height="9"><path d="M3 0 H8 V5Z M0 3 V8 H5Z" fill="#000"/></svg><div class="a" style="left:371px;top:138px;width:75px;height:18px;background:#dcdcdc;border-radius:3px"></div><div class="a" style="left:386px;top:138px;width:3px;height:18px;background:linear-gradient(90deg,#b8b8b8,#f4f4f4,#aaa)"></div><div class="t" style="left:374px;top:141px;font-size:12px;color:#111">Y</div><div class="t" style="left:390px;top:141px;font-size:12px;color:#111">250</div><svg style="left:432px;top:143px" width="9" height="9"><path d="M3 0 H8 V5Z M0 3 V8 H5Z" fill="#000"/></svg><svg style="left:150px;top:410px" width="160" height="180" viewBox="0 0 160 180"><defs><radialGradient id="fgA" cx="0.45" cy="0.35" r="0.7"><stop offset="0" stop-color="#767a84"/><stop offset="1" stop-color="#5c606a"/></radialGradient></defs>
<path d="M38 73 C36 85 34 98 32 108 C29 120 25 135 24.5 150 C26 156 32 158 37 158 C39 150 41 135 43 122 C45 110 44 95 42 85 Z" fill="#686c76"/>
<path d="M106 66 C116 70 122 76 124 86 C127 98 130 110 135 119 C140 128 143 136 143 142 C140 148 134 152 128 154 C125 145 123 138 121 131 C116 124 112 118 110 112 Z" fill="#6a6e78"/>
<path d="M48 61 C54 59 58 61 60 64 L73 88 L87 66 C92 62 100 63 106 66 C112 90 110 110 108 112 C106 122 105 128 106 130 C104 140 104 150 105 163 L50 163 C51 150 53 140 52 133 C50 125 44 110 42 95 C40 80 42 66 48 61 Z" fill="url(#fgA)"/>
<path d="M38.6 78 C38 68 44 62 50 61 C56 62 58 70 57 80 C52 84 44 84 38.6 80Z" fill="#737781"/>
<path d="M104 66 C114 64 122 72 124 84 C124 90 120 92 114 90 C108 86 104 76 104 66Z" fill="#70747e"/>
<path d="M61 68 C66 78 70 86 73 88 C78 84 84 76 88 66 L84 66 C80 72 76 74 73 74 C69 74 65 72 63 67 Z" fill="#15171c"/>
<path d="M73 26.8 C83 26.8 89 36 89 46 C89 58 86 66 80 71 C77 73.5 75 74 72 73.5 C66 72 61 66 59 60 C56 52 56 40 60 34 C63 29 68 26.8 73 26.8Z" fill="#6a6e78"/>
<path d="M52 131 C62 126 70 126 80 132 C88 136 96 134 104 133" stroke="#a4a8b0" stroke-width="0.9" fill="none"/>
<path d="M54 163 C56 152 56 146 55 138 M101 138 C101 148 102 156 103 163" stroke="#9a9ea6" stroke-width="0.8" fill="none"/></svg><div class="a" style="left:6px;top:757px;width:447px;height:27px;background:#252525"></div>
<div class="a" style="left:10px;top:762px;width:150px;height:22px;background:#3e3e3e;border-radius:2px 2px 0 0"></div>
<div class="a" style="left:161px;top:762px;width:150px;height:22px;background:#333;border-radius:2px 2px 0 0"></div>
<svg style="left:16px;top:765px" width="17" height="16"><path d="M10 10 L15 15" stroke="#3d6fe0" stroke-width="2"/><circle cx="7" cy="7" r="6" fill="#444" stroke="#6a8ae0" stroke-width="1.5"/><circle cx="7" cy="4" r="1" fill="#fff"/><rect x="6" y="6" width="2" height="5" fill="#fff"/></svg><svg style="left:167px;top:765px" width="17" height="16"><path d="M10 10 L15 15" stroke="#3d6fe0" stroke-width="2"/><circle cx="7" cy="7" r="6" fill="#444" stroke="#6a8ae0" stroke-width="1.5"/><circle cx="7" cy="4" r="1" fill="#fff"/><rect x="6" y="6" width="2" height="5" fill="#fff"/></svg><div class="t" style="left:38px;top:767px;font-size:12px;color:#e8e8e8;text-shadow:1px 1px 0 #000">Details</div><div class="t" style="left:189px;top:767px;font-size:12px;color:#e8e8e8;text-shadow:1px 1px 0 #000;width:100px;overflow:hidden">Parameter Defaults</div><svg style="left:144px;top:770px" width="7" height="7"><path d="M0.5 0.5 L6.5 6.5 M6.5 0.5 L0.5 6.5" stroke="#6a6a6a" stroke-width="1"/></svg><svg style="left:295px;top:770px" width="7" height="7"><path d="M0.5 0.5 L6.5 6.5 M6.5 0.5 L0.5 6.5" stroke="#6a6a6a" stroke-width="1"/></svg><div class="a" style="left:6px;top:784px;width:447px;height:602px;background:#3d3d3d"></div>
<div class="a" style="left:10px;top:789px;width:369px;height:18px;background:#d2d2d2;border-radius:3px"></div>
<div class="t" style="left:15px;top:792px;font-size:11.5px;color:#8a8a8a">Search Details</div>
<svg style="left:363px;top:791px" width="14" height="14"><circle cx="8" cy="6" r="4.2" fill="none" stroke="#000" stroke-width="1.8"/><path d="M5 9 L1.5 12.5" stroke="#000" stroke-width="2.4"/></svg>
<div class="a" style="left:388px;top:787px;width:26px;height:22px;background:linear-gradient(#d8d8d8,#a8a8a8);border:1px solid #555;border-radius:2px"></div>
<div class="a" style="left:395px;top:792px;width:13px;height:12px;background:repeating-linear-gradient(#555 0 1.4px,transparent 1.4px 3px)"></div>
<svg style="left:418px;top:792px" width="30" height="12"><path d="M0 6 Q9 -2 18 6 Q9 14 0 6Z" fill="#cfcfcf"/><circle cx="9" cy="6" r="3" fill="#4a5f90"/><path d="M22 4 H29 L25.5 8Z" fill="#bbb"/></svg>
<div class="a" style="left:8px;top:810px;width:443px;height:29px;background:#2e2e2e;border-radius:2px 2px 0 0"></div><div class="a" style="left:157px;top:810px;width:1px;height:29px;background:#262626"></div><svg style="left:11px;top:822.0px" width="8" height="8"><path d="M7 0 V7 H0Z" fill="#9a9a9a"/></svg><div class="t" style="left:22px;top:818.5px;font-size:12.5px;font-weight:bold;color:#ececec;text-shadow:1px 1px 1px #000;max-width:135px;overflow:hidden">Material</div><div class="a" style="left:157px;top:839px;width:1px;height:54px;background:#2a2a2a"></div><div class="t" style="left:24px;top:847.1px;font-size:11.3px;color:#d6d6d6;max-width:133px;overflow:hidden">Material Domain</div><div class="a" style="left:162px;top:843px;width:103px;height:19px;background:linear-gradient(#e6e6e6,#bdbdbd 60%,#a9a9a9);border:1px solid #2a2a2a;border-radius:2px"></div><div class="t" style="left:167px;top:847.0px;font-size:11.3px;color:#111">User Interface</div><svg style="left:250px;top:850.0px" width="9" height="6"><path d="M0 0 H8.5 L4.25 5Z" fill="#000"/></svg><svg style="left:274px;top:848.0px" width="9" height="10"><path d="M2 1 V3.5 H7 V8.5 H2" stroke="#e8e020" stroke-width="1.4" fill="none"/><path d="M0 3.5 L2.5 1 L2.5 6Z" fill="#e8e020"/></svg><div class="t" style="left:24px;top:873.1px;font-size:11.3px;color:#d6d6d6;max-width:133px;overflow:hidden">Blend Mode</div><div class="a" style="left:162px;top:869px;width:103px;height:19px;background:linear-gradient(#e6e6e6,#bdbdbd 60%,#a9a9a9);border:1px solid #2a2a2a;border-radius:2px"></div><div class="t" style="left:167px;top:873.0px;font-size:11.3px;color:#111">Masked</div><svg style="left:250px;top:876.0px" width="9" height="6"><path d="M0 0 H8.5 L4.25 5Z" fill="#000"/></svg><svg style="left:274px;top:874.0px" width="9" height="10"><path d="M2 1 V3.5 H7 V8.5 H2" stroke="#e8e020" stroke-width="1.4" fill="none"/><path d="M0 3.5 L2.5 1 L2.5 6Z" fill="#e8e020"/></svg><div class="a" style="left:8px;top:893px;width:429px;height:2px;background:linear-gradient(#2e2e2e,#393939)"></div><div class="a" style="left:157px;top:900px;width:1px;height:50px;background:#2a2a2a"></div><div class="t" style="left:24px;top:909.1px;font-size:11.3px;color:#d6d6d6;max-width:133px;overflow:hidden">Opacity Mask Clip Value</div><div class="a" style="left:161px;top:906px;width:105px;height:17px;background:#dcdcdc;border-radius:3px"></div><div class="t" style="left:165px;top:909.0px;font-size:11.3px;color:#111">0.3333</div><svg style="left:251px;top:910.5px" width="9" height="9"><path d="M3 0 H8 V5Z M0 3 V8 H5Z" fill="#000"/></svg><div class="t" style="left:24px;top:933.1px;font-size:11.3px;color:#d6d6d6;max-width:133px;overflow:hidden">Num Customized UVs</div><div class="a" style="left:161px;top:930px;width:105px;height:17px;background:#dcdcdc;border-radius:3px"></div><div class="t" style="left:165px;top:933.0px;font-size:11.3px;color:#111">0</div><svg style="left:251px;top:934.5px" width="9" height="9"><path d="M3 0 H8 V5Z M0 3 V8 H5Z" fill="#000"/></svg><div class="a" style="left:8px;top:952px;width:429px;height:14px;background:#474747"></div><svg style="left:216px;top:955px" width="11" height="9"><path d="M0 5 L5.5 0 L11 5Z M0 6.5 H11 V8 H0Z" fill="#d0d0d0"/></svg><div class="a" style="left:8px;top:966px;width:443px;height:29px;background:#2e2e2e;border-radius:2px 2px 0 0"></div><div class="a" style="left:157px;top:966px;width:1px;height:29px;background:#262626"></div><svg style="left:11px;top:978.0px" width="8" height="8"><path d="M7 0 V7 H0Z" fill="#9a9a9a"/></svg><div class="t" style="left:22px;top:974.5px;font-size:12.5px;font-weight:bold;color:#ececec;text-shadow:1px 1px 1px #000;max-width:135px;overflow:hidden">Mobile</div><div class="a" style="left:157px;top:995px;width:1px;height:25px;background:#2a2a2a"></div><div class="t" style="left:24px;top:1001.6px;font-size:11.3px;color:#d6d6d6;max-width:133px;overflow:hidden">Use Full Precision</div><div class="a" style="left:162px;top:1000px;width:14px;height:14px;background:#ababab;border-radius:2px"></div><div class="a" style="left:8px;top:1021px;width:443px;height:29px;background:#2e2e2e;border-radius:2px 2px 0 0"></div><div class="a" style="left:157px;top:1021px;width:1px;height:29px;background:#262626"></div><svg style="left:11px;top:1033.0px" width="8" height="8"><path d="M7 0 V7 H0Z" fill="#9a9a9a"/></svg><div class="t" style="left:22px;top:1029.5px;font-size:12.5px;font-weight:bold;color:#ececec;text-shadow:1px 1px 1px #000;max-width:135px;overflow:hidden">Physical Material Mask</div><div class="a" style="left:157px;top:1050px;width:1px;height:36px;background:#2a2a2a"></div><div class="t" style="left:24px;top:1056.6px;font-size:11.3px;color:#d6d6d6;max-width:133px;overflow:hidden">Physical Material Map</div><svg style="left:12px;top:1057px" width="6" height="10"><path d="M0.5 0.5 L5.5 5 L0.5 9.5Z" fill="none" stroke="#bbb" stroke-width="1"/></svg><div class="t" style="left:165px;top:1056.6px;font-size:11.3px;color:#d6d6d6">8 Array elements</div><div class="a" style="left:8px;top:1087px;width:443px;height:29px;background:#2e2e2e;border-radius:2px 2px 0 0"></div><div class="a" style="left:157px;top:1087px;width:1px;height:29px;background:#262626"></div><svg style="left:11px;top:1099.0px" width="8" height="8"><path d="M7 0 V7 H0Z" fill="#9a9a9a"/></svg><div class="t" style="left:22px;top:1095.5px;font-size:12.5px;font-weight:bold;color:#ececec;text-shadow:1px 1px 1px #000;max-width:135px;overflow:hidden">Forward Shading</div><div class="a" style="left:157px;top:1116px;width:1px;height:108px;background:#2a2a2a"></div><div class="t" style="left:24px;top:1122.6px;font-size:11.3px;color:#d6d6d6;max-width:133px;overflow:hidden">PreintegratedGF For Simple IBL</div><div class="a" style="left:162px;top:1121px;width:14px;height:14px;background:#ababab;border-radius:2px"></div><div class="t" style="left:24px;top:1146.6px;font-size:11.3px;color:#d6d6d6;max-width:133px;overflow:hidden">High Quality Reflections</div><div class="a" style="left:162px;top:1145px;width:14px;height:14px;background:#6b6b6b;border-radius:2px"></div><div class="t" style="left:24px;top:1170.6px;font-size:11.3px;color:#d6d6d6;max-width:133px;overflow:hidden">Blend Sky Light Cubemaps</div><div class="a" style="left:162px;top:1169px;width:14px;height:14px;background:#6b6b6b;border-radius:2px"></div><div class="t" style="left:24px;top:1194.6px;font-size:11.3px;color:#d6d6d6;max-width:133px;overflow:hidden">Planar Reflections</div><div class="a" style="left:162px;top:1193px;width:14px;height:14px;background:#6b6b6b;border-radius:2px"></div><div class="a" style="left:8px;top:1225px;width:443px;height:29px;background:#2e2e2e;border-radius:2px 2px 0 0"></div><div class="a" style="left:157px;top:1225px;width:1px;height:29px;background:#262626"></div><svg style="left:11px;top:1237.0px" width="8" height="8"><path d="M7 0 V7 H0Z" fill="#9a9a9a"/></svg><div class="t" style="left:22px;top:1233.5px;font-size:12.5px;font-weight:bold;color:#ececec;text-shadow:1px 1px 1px #000;max-width:135px;overflow:hidden">Group Sorting</div><div class="a" style="left:157px;top:1254px;width:1px;height:36px;background:#2a2a2a"></div><div class="t" style="left:24px;top:1260.6px;font-size:11.3px;color:#d6d6d6;max-width:133px;overflow:hidden">Parameter Group Data</div><div class="t" style="left:165px;top:1260.6px;font-size:11.3px;color:#d6d6d6">0 Array elements</div><div class="a" style="left:8px;top:1291px;width:443px;height:29px;background:#2e2e2e;border-radius:2px 2px 0 0"></div><div class="a" style="left:157px;top:1291px;width:1px;height:29px;background:#262626"></div><svg style="left:11px;top:1303.0px" width="8" height="8"><path d="M7 0 V7 H0Z" fill="#9a9a9a"/></svg><div class="t" style="left:22px;top:1299.5px;font-size:12.5px;font-weight:bold;color:#ececec;text-shadow:1px 1px 1px #000;max-width:135px;overflow:hidden">Refraction</div><div class="a" style="left:157px;top:1320px;width:1px;height:63px;background:#2a2a2a"></div><div class="t" style="left:24px;top:1328.1px;font-size:11.3px;color:#d6d6d6;max-width:133px;overflow:hidden">Refraction Mode</div><div class="a" style="left:162px;top:1324px;width:119px;height:19px;background:linear-gradient(#e6e6e6,#bdbdbd 60%,#a9a9a9);border:1px solid #2a2a2a;border-radius:2px"></div><div class="t" style="left:167px;top:1328.0px;font-size:11.3px;color:#111">Index Of Refraction</div><svg style="left:266px;top:1331.0px" width="9" height="6"><path d="M0 0 H8.5 L4.25 5Z" fill="#000"/></svg><div class="t" style="left:24px;top:1353.1px;font-size:11.3px;color:#d6d6d6;max-width:133px;overflow:hidden">Refraction Depth Bias</div><div class="a" style="left:161px;top:1350px;width:105px;height:17px;background:#7a7a7a;border-radius:3px"></div><div class="t" style="left:165px;top:1353.0px;font-size:11.3px;color:#444">0.0</div><svg style="left:251px;top:1354.5px" width="9" height="9"><path d="M3 0 H8 V5Z M0 3 V8 H5Z" fill="#333"/></svg><div class="a" style="left:6px;top:1383px;width:447px;height:3px;background:#303030"></div><div class="a" style="left:443px;top:813px;width:1px;height:568px;background:#5a5a5a"></div><div class="a" style="left:438px;top:813px;width:10px;height:457px;background:#fff;border-radius:2px"></div><div class="a" style="left:458px;top:131px;width:1787px;height:1001px;background:#424242"></div>
<div class="a" style="left:460px;top:133px;width:1783px;height:997px;background-color:#252525;
background-image:
linear-gradient(90deg,#171717 1px,transparent 1px),
linear-gradient(#171717 1px,transparent 1px),
linear-gradient(90deg,#323232 1px,transparent 1px),
linear-gradient(#323232 1px,transparent 1px);
background-size:128px 128px,128px 128px,16px 16px,16px 16px;
background-position:49px 45px,49px 45px,1px 13px,1px 13px"></div>
<div class="a" style="left:460px;top:133px;width:1783px;height:997px;box-shadow:inset 0 0 55px rgba(0,0,0,0.42)"></div>
<div class="a" style="left:1533px;top:133px;width:1px;height:997px;background:#000"></div>
<div class="a" style="left:460px;top:434px;width:1783px;height:1px;background:#000"></div>
<svg style="left:458px;top:131px" width="11" height="11"><path d="M0 0 H10 L0 10Z" fill="#b8961e"/></svg>
<div class="t" style="left:2158px;top:141px;font-size:20px;font-weight:bold;color:#5c5c5c;transform:scaleX(0.88);transform-origin:0 0">Zoom 1:1</div>
<div class="t" style="left:1970.5px;top:1050px;font-size:67.5px;font-weight:bold;color:rgba(255,255,255,0.2);transform:scaleX(0.762);transform-origin:0 0">MATERIAL</div>
<svg style="left:0;top:0" width="2703" height="1393"><path d="M1251,665 C1401.45,665 1395.55,500.5 1546,500.5" stroke="#4a4a4a" stroke-width="1.5" fill="none"/><path d="M1061,508 C1303.5,508 1303.5,474.5 1546,474.5" stroke="#e4e4e4" stroke-width="1.8" fill="none"/><path d="M1061,612 C1142.4,612 1127.6,665 1209,665" stroke="#e4e4e4" stroke-width="1.8" fill="none"/><path d="M1268,780 C1459.82,780 1354.18,526.5 1546,526.5" stroke="#e4e4e4" stroke-width="1.8" fill="none"/></svg><div class="a" style="left:878.5px;top:468px;width:200.0px;height:213px;background:rgba(17,19,17,0.95);border:1.5px solid #0a0a0a;border-radius:6px;box-shadow:0 1px 3px rgba(0,0,0,0.6)"></div><div class="a" style="left:880.5px;top:470px;width:196.0px;height:22px;background:linear-gradient(90deg,#1f6d95 0%,#1a5f83 45%,#143446 85%,#1a1f22 100%);border-radius:5px 5px 0 0;border-top:1px solid rgba(255,255,255,0.35)"></div><div class="t" style="left:892.0px;top:475.8px;font-size:12.2px;font-weight:bold;color:#f0f0f0;text-shadow:1px 1px 1px #000">Texture Sample</div><svg style="left:1059.5px;top:477px" width="12" height="9"><path d="M0 8.5 L5.5 0 L11 8.5Z" fill="#cfcfcf"/></svg><svg style="left:886.5px;top:502px" width="14" height="12"><circle cx="6" cy="6" r="4.8" fill="#0c0c0c" stroke="#3a3a3a" stroke-width="1.3"/><path d="M11 4 L13 6 L11 8Z" fill="#3a3a3a"/></svg><div class="t" style="left:907.0px;top:502.0px;font-size:12px;color:#ececec">UVs</div><svg style="left:886.5px;top:528px" width="14" height="12"><circle cx="6" cy="6" r="4.8" fill="#0c0c0c" stroke="#3a3a3a" stroke-width="1.3"/><path d="M11 4 L13 6 L11 8Z" fill="#3a3a3a"/></svg><div class="t" style="left:907.0px;top:528.0px;font-size:12px;color:#ececec">Tex</div><svg style="left:886.5px;top:554px" width="14" height="12"><circle cx="6" cy="6" r="4.8" fill="#0c0c0c" stroke="#3a3a3a" stroke-width="1.3"/><path d="M11 4 L13 6 L11 8Z" fill="#3a3a3a"/></svg><div class="t" style="left:907.0px;top:554.0px;font-size:12px;color:#ececec">Apply View MipBias</div><svg style="left:1054.5px;top:502px" width="15" height="12"><circle cx="6" cy="6" r="5.4" fill="#f0f0f0"/><path d="M11.5 3.5 L14.5 6 L11.5 8.5Z" fill="#f0f0f0"/></svg><div class="t" style="left:899.0px;width:150px;text-align:right;top:502.0px;font-size:12px;color:#ececec">RGB</div><svg style="left:1054.5px;top:528px" width="15" height="12"><circle cx="6" cy="6" r="4.6" fill="#0c0c0c" stroke="#e01515" stroke-width="1.7"/><path d="M11.5 3.5 L14.5 6 L11.5 8.5Z" fill="#e01515"/></svg><div class="t" style="left:899.0px;width:150px;text-align:right;top:528.0px;font-size:12px;color:#ececec">R</div><svg style="left:1054.5px;top:554px" width="15" height="12"><circle cx="6" cy="6" r="4.6" fill="#0c0c0c" stroke="#15d015" stroke-width="1.7"/><path d="M11.5 3.5 L14.5 6 L11.5 8.5Z" fill="#15d015"/></svg><div class="t" style="left:899.0px;width:150px;text-align:right;top:554.0px;font-size:12px;color:#ececec">G</div><svg style="left:1054.5px;top:580px" width="15" height="12"><circle cx="6" cy="6" r="4.6" fill="#0c0c0c" stroke="#1a1ae0" stroke-width="1.7"/><path d="M11.5 3.5 L14.5 6 L11.5 8.5Z" fill="#1a1ae0"/></svg><div class="t" style="left:899.0px;width:150px;text-align:right;top:580.0px;font-size:12px;color:#ececec">B</div><svg style="left:1054.5px;top:606px" width="15" height="12"><circle cx="6" cy="6" r="5.4" fill="#c8c8c8"/><path d="M11.5 3.5 L14.5 6 L11.5 8.5Z" fill="#c8c8c8"/></svg><div class="t" style="left:899.0px;width:150px;text-align:right;top:606.0px;font-size:12px;color:#ececec">A</div><svg style="left:1054.5px;top:632px" width="15" height="12"><circle cx="6" cy="6" r="4.6" fill="#0c0c0c" stroke="#f0f0f0" stroke-width="1.7"/><path d="M11.5 3.5 L14.5 6 L11.5 8.5Z" fill="#f0f0f0"/></svg><div class="t" style="left:899.0px;width:150px;text-align:right;top:632.0px;font-size:12px;color:#ececec">RGBA</div><div class="a" style="left:884.5px;top:578px;width:96px;height:96px;background:#000;overflow:hidden"><svg style="left:16.6px;top:28.6px" width="62.4" height="76.9" viewBox="0 0 160 180" preserveAspectRatio="none"><defs><radialGradient id="fgB" cx="0.45" cy="0.35" r="0.7"><stop offset="0" stop-color="#767a84"/><stop offset="1" stop-color="#5c606a"/></radialGradient></defs>
<path d="M38 73 C36 85 34 98 32 108 C29 120 25 135 24.5 150 C26 156 32 158 37 158 C39 150 41 135 43 122 C45 110 44 95 42 85 Z" fill="#686c76"/>
<path d="M106 66 C116 70 122 76 124 86 C127 98 130 110 135 119 C140 128 143 136 143 142 C140 148 134 152 128 154 C125 145 123 138 121 131 C116 124 112 118 110 112 Z" fill="#6a6e78"/>
<path d="M48 61 C54 59 58 61 60 64 L73 88 L87 66 C92 62 100 63 106 66 C112 90 110 110 108 112 C106 122 105 128 106 130 C104 140 104 150 105 163 L50 163 C51 150 53 140 52 133 C50 125 44 110 42 95 C40 80 42 66 48 61 Z" fill="url(#fgB)"/>
<path d="M38.6 78 C38 68 44 62 50 61 C56 62 58 70 57 80 C52 84 44 84 38.6 80Z" fill="#737781"/>
<path d="M104 66 C114 64 122 72 124 84 C124 90 120 92 114 90 C108 86 104 76 104 66Z" fill="#70747e"/>
<path d="M61 68 C66 78 70 86 73 88 C78 84 84 76 88 66 L84 66 C80 72 76 74 73 74 C69 74 65 72 63 67 Z" fill="#15171c"/>
<path d="M73 26.8 C83 26.8 89 36 89 46 C89 58 86 66 80 71 C77 73.5 75 74 72 73.5 C66 72 61 66 59 60 C56 52 56 40 60 34 C63 29 68 26.8 73 26.8Z" fill="#6a6e78"/>
<path d="M52 131 C62 126 70 126 80 132 C88 136 96 134 104 133" stroke="#a4a8b0" stroke-width="0.9" fill="none"/>
<path d="M54 163 C56 152 56 146 55 138 M101 138 C101 148 102 156 103 163" stroke="#9a9ea6" stroke-width="0.8" fill="none"/></svg></div><div class="a" style="left:1087px;top:740px;width:200px;height:213px;background:rgba(17,19,17,0.95);border:1.5px solid #0a0a0a;border-radius:6px;box-shadow:0 1px 3px rgba(0,0,0,0.6)"></div><div class="a" style="left:1089px;top:742px;width:196px;height:22px;background:linear-gradient(90deg,#1f6d95 0%,#1a5f83 45%,#143446 85%,#1a1f22 100%);border-radius:5px 5px 0 0;border-top:1px solid rgba(255,255,255,0.35)"></div><div class="t" style="left:1100.5px;top:747.8px;font-size:12.2px;font-weight:bold;color:#f0f0f0;text-shadow:1px 1px 1px #000">Texture Sample</div><svg style="left:1268px;top:749px" width="12" height="9"><path d="M0 8.5 L5.5 0 L11 8.5Z" fill="#cfcfcf"/></svg><svg style="left:1095px;top:774px" width="14" height="12"><circle cx="6" cy="6" r="4.8" fill="#0c0c0c" stroke="#3a3a3a" stroke-width="1.3"/><path d="M11 4 L13 6 L11 8Z" fill="#3a3a3a"/></svg><div class="t" style="left:1115.5px;top:774.0px;font-size:12px;color:#ececec">UVs</div><svg style="left:1095px;top:800px" width="14" height="12"><circle cx="6" cy="6" r="4.8" fill="#0c0c0c" stroke="#3a3a3a" stroke-width="1.3"/><path d="M11 4 L13 6 L11 8Z" fill="#3a3a3a"/></svg><div class="t" style="left:1115.5px;top:800.0px;font-size:12px;color:#ececec">Tex</div><svg style="left:1095px;top:826px" width="14" height="12"><circle cx="6" cy="6" r="4.8" fill="#0c0c0c" stroke="#3a3a3a" stroke-width="1.3"/><path d="M11 4 L13 6 L11 8Z" fill="#3a3a3a"/></svg><div class="t" style="left:1115.5px;top:826.0px;font-size:12px;color:#ececec">Apply View MipBias</div><svg style="left:1263px;top:774px" width="15" height="12"><circle cx="6" cy="6" r="5.4" fill="#f0f0f0"/><path d="M11.5 3.5 L14.5 6 L11.5 8.5Z" fill="#f0f0f0"/></svg><div class="t" style="left:1107.5px;width:150px;text-align:right;top:774.0px;font-size:12px;color:#ececec">RGB</div><svg style="left:1263px;top:800px" width="15" height="12"><circle cx="6" cy="6" r="4.6" fill="#0c0c0c" stroke="#e01515" stroke-width="1.7"/><path d="M11.5 3.5 L14.5 6 L11.5 8.5Z" fill="#e01515"/></svg><div class="t" style="left:1107.5px;width:150px;text-align:right;top:800.0px;font-size:12px;color:#ececec">R</div><svg style="left:1263px;top:826px" width="15" height="12"><circle cx="6" cy="6" r="4.6" fill="#0c0c0c" stroke="#15d015" stroke-width="1.7"/><path d="M11.5 3.5 L14.5 6 L11.5 8.5Z" fill="#15d015"/></svg><div class="t" style="left:1107.5px;width:150px;text-align:right;top:826.0px;font-size:12px;color:#ececec">G</div><svg style="left:1263px;top:852px" width="15" height="12"><circle cx="6" cy="6" r="4.6" fill="#0c0c0c" stroke="#1a1ae0" stroke-width="1.7"/><path d="M11.5 3.5 L14.5 6 L11.5 8.5Z" fill="#1a1ae0"/></svg><div class="t" style="left:1107.5px;width:150px;text-align:right;top:852.0px;font-size:12px;color:#ececec">B</div><svg style="left:1263px;top:878px" width="15" height="12"><circle cx="6" cy="6" r="4.6" fill="#0c0c0c" stroke="#b0b0b0" stroke-width="1.7"/><path d="M11.5 3.5 L14.5 6 L11.5 8.5Z" fill="#b0b0b0"/></svg><div class="t" style="left:1107.5px;width:150px;text-align:right;top:878.0px;font-size:12px;color:#ececec">A</div><svg style="left:1263px;top:904px" width="15" height="12"><circle cx="6" cy="6" r="4.6" fill="#0c0c0c" stroke="#f0f0f0" stroke-width="1.7"/><path d="M11.5 3.5 L14.5 6 L11.5 8.5Z" fill="#f0f0f0"/></svg><div class="t" style="left:1107.5px;width:150px;text-align:right;top:904.0px;font-size:12px;color:#ececec">RGBA</div><div class="a" style="left:1093px;top:850px;width:96px;height:96px;background:#000;overflow:hidden"><div class="a" style="left:3px;top:3px;width:90px;height:90px;border-radius:50%;background:#fff"></div></div><div class="a" style="left:1535px;top:435px;width:159px;height:132px;background:rgba(17,19,17,0.95);border:1.5px solid #0a0a0a;border-radius:6px;box-shadow:0 1px 3px rgba(0,0,0,0.6)"></div><div class="a" style="left:1537px;top:437px;width:155px;height:22px;background:linear-gradient(90deg,#8a7661 0%,#7a6753 50%,#4a3f35 85%,#2a2724 100%);border-radius:5px 5px 0 0;border-top:1px solid rgba(255,255,255,0.35)"></div><div class="t" style="left:1548.5px;top:442.5px;font-size:12px;font-weight:bold;color:#f0f0f0;text-shadow:1px 1px 1px #000">MAT_RenderTarget</div><svg style="left:1545.5px;top:468.5px" width="14" height="12"><circle cx="6" cy="6" r="5.4" fill="#f0f0f0"/><path d="M11.5 3.5 L14 6 L11.5 8.5Z" fill="#f0f0f0"/></svg><div class="t" style="left:1566.5px;top:468.5px;font-size:12px;color:#ececec">Final Color</div><svg style="left:1545.5px;top:494.5px" width="14" height="12"><circle cx="6" cy="6" r="5.4" fill="#3a3a3a"/><path d="M11.5 3.5 L14 6 L11.5 8.5Z" fill="#3a3a3a"/></svg><div class="t" style="left:1566.5px;top:494.5px;font-size:12px;color:#474747">Opacity</div><svg style="left:1545.5px;top:520.5px" width="14" height="12"><circle cx="6" cy="6" r="5.4" fill="#f0f0f0"/><path d="M11.5 3.5 L14 6 L11.5 8.5Z" fill="#f0f0f0"/></svg><div class="t" style="left:1566.5px;top:520.5px;font-size:12px;color:#ececec">Opacity Mask</div><svg style="left:1545.5px;top:546.5px" width="15" height="12"><circle cx="6" cy="6" r="4.6" fill="#0c0c0c" stroke="#e8e8e8" stroke-width="1.7"/><path d="M11.5 3.5 L14.5 6 L11.5 8.5Z" fill="#e8e8e8"/></svg><div class="t" style="left:1566.5px;top:546.5px;font-size:12px;color:#ececec">Screen Position</div><div class="a" style="left:1194px;top:624px;width:69px;height:54px;background:rgba(17,19,17,0.95);border:1.5px solid #0a0a0a;border-radius:6px;box-shadow:0 1px 3px rgba(0,0,0,0.6)"></div><div class="a" style="left:1196px;top:626px;width:65px;height:22px;background:linear-gradient(90deg,#5b7b58 0%,#4f6b4c 55%,#2b3a2a 90%,#222 100%);border-radius:5px 5px 0 0;border-top:1px solid rgba(255,255,255,0.35)"></div><div class="t" style="left:1208.5px;top:630.5px;font-size:12.5px;font-weight:bold;color:#f0f0f0;text-shadow:1px 1px 1px #000">1-x</div><svg style="left:1244px;top:632px" width="12" height="9"><path d="M0 0 H11 L5.5 8.5Z" fill="#d0d0d0"/></svg><svg style="left:1203px;top:659px" width="14" height="12"><circle cx="6" cy="6" r="5.4" fill="#f0f0f0"/><path d="M11.5 3.5 L14 6 L11.5 8.5Z" fill="#f0f0f0"/></svg><svg style="left:1239px;top:659px" width="15" height="12"><circle cx="6" cy="6" r="5.4" fill="#f0f0f0"/><path d="M11.5 3.5 L14.5 6 L11.5 8.5Z" fill="#f0f0f0"/></svg><div class="a" style="left:462px;top:1137px;width:150px;height:22px;background:#3a3a3a;border-radius:2px 2px 0 0"></div>
<svg style="left:469px;top:1140px" width="16" height="17"><path d="M2 1 L11 1 L14 4 L14 16 L2 16Z" fill="#d8e0f8"/><path d="M4 4 L9 8 L4 12" stroke="#2f5fc8" stroke-width="2" fill="none"/><rect x="8" y="12" width="5" height="1.6" fill="#2f5fc8"/></svg>
<div class="t" style="left:490px;top:1142px;font-size:12px;color:#e8e8e8;text-shadow:1px 1px 0 #000">Stats</div>
<svg style="left:596px;top:1145px" width="7" height="7"><path d="M0.5 0.5 L6.5 6.5 M6.5 0.5 L0.5 6.5" stroke="#6a6a6a" stroke-width="1"/></svg>
<div class="a" style="left:458px;top:1159px;width:1787px;height:228px;background:#3c3c3c"></div>
<div class="a" style="left:464px;top:1165px;width:1775px;height:216px;background:#222"></div>
<div class="a" style="left:474px;top:1174.5px;width:4px;height:4px;border-radius:50%;background:#6cc4ff"></div><div class="t" style="left:490.5px;top:1171.6px;font-family:'Liberation Mono',monospace;font-size:12.6px;letter-spacing:-0.58px;color:#bdbdbd">Default UI Pixel Shader: 37 instructions</div><div class="a" style="left:474px;top:1194.5px;width:4px;height:4px;border-radius:50%;background:#6cc4ff"></div><div class="t" style="left:490.5px;top:1191.6px;font-family:'Liberation Mono',monospace;font-size:12.6px;letter-spacing:-0.58px;color:#bdbdbd">Default UI Vertex Shader: 17 instructions</div><div class="a" style="left:474px;top:1214.5px;width:4px;height:4px;border-radius:50%;background:#6cc4ff"></div><div class="t" style="left:490.5px;top:1211.6px;font-family:'Liberation Mono',monospace;font-size:12.6px;letter-spacing:-0.58px;color:#bdbdbd">Instanced UI Vertex Shader: 17 instructions</div><div class="a" style="left:474px;top:1234.5px;width:4px;height:4px;border-radius:50%;background:#6cc4ff"></div><div class="t" style="left:490.5px;top:1231.6px;font-family:'Liberation Mono',monospace;font-size:12.6px;letter-spacing:-0.58px;color:#bdbdbd">Texture samplers: 3/16</div><div class="a" style="left:474px;top:1254.5px;width:4px;height:4px;border-radius:50%;background:#6cc4ff"></div><div class="t" style="left:490.5px;top:1251.6px;font-family:'Liberation Mono',monospace;font-size:12.6px;letter-spacing:-0.58px;color:#bdbdbd">Texture Lookups (Est.): VS(0), PS(2)</div><div class="a" style="left:474px;top:1274.5px;width:4px;height:4px;border-radius:50%;background:#6cc4ff"></div><div class="t" style="left:490.5px;top:1271.6px;font-family:'Liberation Mono',monospace;font-size:12.6px;letter-spacing:-0.58px;color:#bdbdbd">User interpolators: 2/4 Scalars (1/4 Vectors) (TexCoords: 2, Custom: 0)</div><div class="a" style="left:2254px;top:131px;width:150px;height:22px;background:#3e3e3e;border-radius:2px 2px 0 0"></div>
<svg style="left:2260px;top:135px" width="16" height="14"><rect x="0" y="0" width="2" height="2" fill="#dff"/><rect x="4" y="0" width="12" height="2" fill="#dff"/><rect x="3" y="4" width="2" height="2" fill="#dff"/><rect x="7" y="4" width="9" height="2" fill="#dff"/><rect x="3" y="8" width="2" height="2" fill="#dff"/><rect x="7" y="8" width="9" height="2" fill="#dff"/><rect x="3" y="12" width="2" height="2" fill="#dff"/><rect x="7" y="12" width="9" height="2" fill="#dff"/></svg>
<div class="t" style="left:2282px;top:136px;font-size:12px;color:#e8e8e8;text-shadow:1px 1px 0 #000">Palette</div>
<svg style="left:2387px;top:139px" width="7" height="7"><path d="M0.5 0.5 L6.5 6.5 M6.5 0.5 L0.5 6.5" stroke="#6a6a6a" stroke-width="1"/></svg>
<div class="a" style="left:2250px;top:153px;width:447px;height:1234px;background:#3e3e3e"></div>
<div class="t" style="left:2254px;top:163px;font-size:12px;color:#d8d8d8">Category:</div>
<div class="a" style="left:2310px;top:158px;width:382px;height:20px;background:linear-gradient(#ececec,#c4c4c4 60%,#b0b0b0);border:1px solid #2a2a2a;border-radius:2px"></div>
<div class="t" style="left:2315px;top:163px;font-size:12px;color:#111">All</div>
<svg style="left:2676px;top:165px" width="9" height="6"><path d="M0 0 H8.5 L4.25 5Z" fill="#000"/></svg>
<div class="a" style="left:2254px;top:180px;width:439px;height:17px;background:#d0d0d0;border-radius:3px"></div>
<div class="t" style="left:2259px;top:182.5px;font-size:12px;color:#111">cir</div>
<svg style="left:2677px;top:183px" width="11" height="11"><path d="M1 1 L10 10 M10 1 L1 10" stroke="#000" stroke-width="1.8"/></svg>
</body></html>
